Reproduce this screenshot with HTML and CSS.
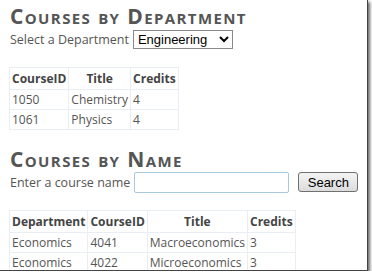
FILE: index.html
```html
<!DOCTYPE html>
<html lang="en">
<head>
  <meta charset="UTF-8">
  <title>Courses</title>
  <link rel="stylesheet" href="styles.css">
</head>
<body>
  <div class="page">
    <h2>Courses by Department</h2>
    <div class="field">
      Select a Department
      <select class="dept">
        <option>Engineering</option>
      </select>
    </div>
    <table class="grid">
      <tr><th>CourseID</th><th>Title</th><th>Credits</th></tr>
      <tr><td>1050</td><td>Chemistry</td><td>4</td></tr>
      <tr><td>1061</td><td>Physics</td><td>4</td></tr>
    </table>

    <h2 class="second">Courses by Name</h2>
    <div class="field">
      Enter a course name
      <input type="text" class="name">
      <button class="search">Search</button>
    </div>
    <table class="grid">
      <tr><th>Department</th><th>CourseID</th><th>Title</th><th>Credits</th></tr>
      <tr><td>Economics</td><td>4041</td><td>Macroeconomics</td><td>3</td></tr>
      <tr><td>Economics</td><td>4022</td><td>Microeconomics</td><td>3</td></tr>
      <tr><td></td><td></td><td></td><td></td></tr>
    </table>
  </div>
</body>
</html>
```

FILE: styles.css
```css
body {
  margin: 0;
  background: #fff;
  font-family: "Open Sans", "Noto Sans", sans-serif;
  font-size: 12.5px;
  color: #555;
}

.page {
  width: 357px;
  height: 263px;
  padding: 7px 0 0 10px;
  overflow: hidden;
  border-right: 1px solid #444;
  border-bottom: 1px solid #444;
  box-shadow: 2px 2px 3px rgba(0, 0, 0, 0.6);
}

h2 {
  margin: 0;
  font-size: 21px;
  letter-spacing: 1.4px;
  font-variant: small-caps;
  font-weight: bold;
  color: #555;
  line-height: 18px;
}

h2.second {
  margin-top: 20px;
}

.field {
  margin-top: 3px;
  display: flex;
  align-items: center;
  height: 22px;
}

.dept {
  margin-left: 4px;
  width: 100px;
  height: 19px;
  font-family: "Liberation Sans", Arial, sans-serif;
  font-size: 13px;
  color: #000;
  border: 1px solid #888;
  background: #fff;
}

.name {
  margin-left: 4px;
  width: 151px;
  height: 17px;
  border: 1px solid #a8c8e0;
  border-radius: 2px;
  padding: 1px;
}

.search {
  margin-left: 9px;
  width: 60px;
  height: 20px;
  font-family: "Liberation Sans", Arial, sans-serif;
  font-size: 13px;
  color: #000;
  border: 1px solid #707070;
  border-radius: 3px;
  background: linear-gradient(#f4f4f4, #dcdcdc);
  padding: 0;
}

.grid {
  margin: 17px 0 0 -1px;
  border-collapse: collapse;
  border-right: 1px solid #bbb;
  border-bottom: 1px solid #bbb;
  font-size: 12px;
}

.grid th,
.grid td {
  border: 1px solid #e8eef4;
  padding: 1px 2px;
  height: 17px;
  line-height: 17px;
  white-space: nowrap;
}

.grid th {
  font-weight: bold;
  color: #444;
  height: 19px;
}

.grid td {
  text-align: left;
}
```
